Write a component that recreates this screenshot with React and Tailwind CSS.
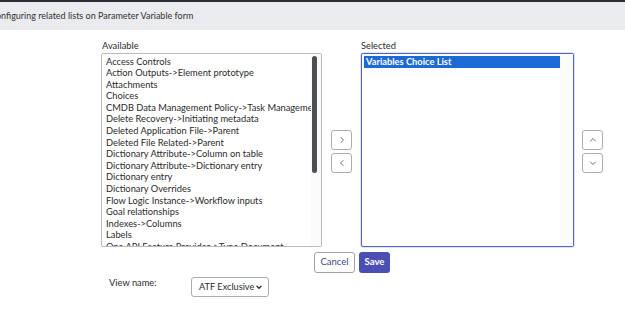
import React from "react";

const items = [
  "Access Controls",
  "Action Outputs->Element prototype",
  "Attachments",
  "Choices",
  "CMDB Data Management Policy->Task Management",
  "Delete Recovery->Initiating metadata",
  "Deleted Application File->Parent",
  "Deleted File Related->Parent",
  "Dictionary Attribute->Column on table",
  "Dictionary Attribute->Dictionary entry",
  "Dictionary entry",
  "Dictionary Overrides",
  "Flow Logic Instance->Workflow inputs",
  "Goal relationships",
  "Indexes->Columns",
  "Labels",
  "One API Feature Provider->Type Document",
  "Parameter Variables",
];

function Chev({ d }) {
  return (
    <svg width="10" height="10" viewBox="0 0 10 10" fill="none" stroke="#6b6f7a" strokeWidth="1" strokeLinecap="round" strokeLinejoin="round">
      <path d={d} />
    </svg>
  );
}

function SmallBtn({ d }) {
  return (
    <div className="w-[21px] h-[20px] rounded-[3px] border border-[#a9adb8] bg-white flex items-center justify-center">
      <Chev d={d} />
    </div>
  );
}

export default function App() {
  return (
    <div className="w-[625px] h-[311px] bg-white overflow-hidden text-[#2b2b2b]" style={{ fontFamily: "Lato, 'Noto Sans', sans-serif" }}>
      <div className="h-[2px] bg-[#2a2d33]" />
      <div className="h-[28px] bg-[#eaebee] flex items-center overflow-hidden">
        <span className="ml-[-10px] whitespace-nowrap text-[9px] text-[#333]">Configuring related lists on Parameter Variable form</span>
      </div>
      <div className="flex items-start pl-[101px] pt-[9px]">
        <div className="w-[221px] flex flex-col">
          <div className="h-[14px] text-[9.3px] leading-[14px] pl-[1px]">Available</div>
          <div className="h-[194px] border border-[#b9bcc4] rounded-[2px] flex overflow-hidden bg-white">
            <div className="flex-1 overflow-hidden pl-[4px] pt-[1.5px] text-[9.3px] leading-[11.6px] text-[#2b2b2b]">
              {items.map((t) => (
                <div key={t} className="whitespace-nowrap overflow-hidden h-[11.6px]">{t}</div>
              ))}
            </div>
            <div className="w-[10px] bg-[#fafafa] relative">
              <div className="absolute left-[1px] top-[2px] w-[5px] h-[117px] rounded-full bg-[#4d4f55]" />
            </div>
          </div>
        </div>
        <div className="w-[21px] ml-[9px] mt-[14px] h-[194px] flex flex-col justify-center gap-[3px] pt-[2px]">
          <SmallBtn d="M4 2.5 L6.5 5 L4 7.5" />
          <SmallBtn d="M6 2.5 L3.5 5 L6 7.5" />
        </div>
        <div className="w-[213px] ml-[9px] flex flex-col">
          <div className="h-[14px] text-[9.3px] leading-[14px]">Selected</div>
          <div className="h-[194px] border border-[#4f63c9] rounded-[2px] shadow-[0_0_0_1px_#dfe4f6] flex bg-white">
            <div className="flex-1 pl-[2px] pt-[2px]">
              <div className="h-[12px] bg-[#1c6ad6] text-white text-[9.3px] leading-[12px] pl-[2px] font-bold">Variables Choice List</div>
            </div>
            <div className="w-[13px] bg-[#fbfbfc]" />
          </div>
        </div>
        <div className="w-[21px] ml-[8px] mt-[14px] h-[194px] flex flex-col justify-center gap-[3px] pt-[2px]">
          <SmallBtn d="M2.5 6 L5 3.5 L7.5 6" />
          <SmallBtn d="M2.5 4 L5 6.5 L7.5 4" />
        </div>
      </div>
      <div className="flex pl-[314px] pt-[5px] gap-[4px]">
        <div className="h-[21px] w-[41px] rounded-[3px] border border-[#9ea2ae] bg-white text-[#3c4a86] text-[9.5px] flex items-center justify-center">Cancel</div>
        <div className="h-[21px] w-[31px] rounded-[3px] bg-[#4b4fb4] text-white text-[9.5px] font-bold flex items-center justify-center">Save</div>
      </div>
      <div className="flex items-center pl-[109px] pt-[4px]">
        <div className="w-[82px] text-[9.3px] mt-[-8px] whitespace-nowrap">View name:</div>
        <div className="h-[20px] w-[78px] rounded-[3px] border border-[#a9adb8] bg-white flex items-center pl-[7px] text-[9.2px] whitespace-nowrap">
          <span className="flex-1">ATF Exclusive</span>
          <svg width="8" height="8" viewBox="0 0 10 10" className="mr-[5px]" fill="none" stroke="#333" strokeWidth="1.8" strokeLinecap="round" strokeLinejoin="round">
            <path d="M2.5 4 L5 6.5 L7.5 4" />
          </svg>
        </div>
      </div>
    </div>
  );
}
